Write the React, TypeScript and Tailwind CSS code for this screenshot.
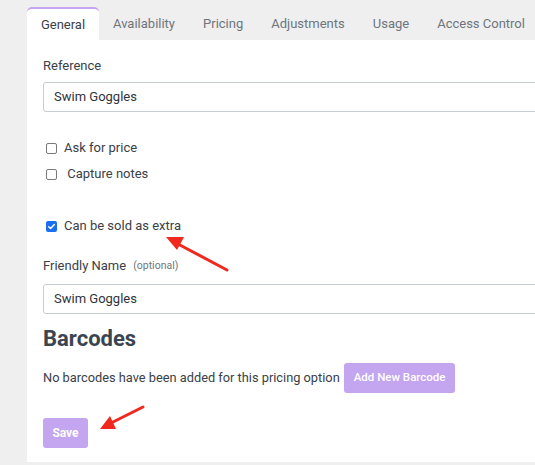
import React from 'react';

const tabs = ['General', 'Availability', 'Pricing', 'Adjustments', 'Usage', 'Access Control'];

const Checkbox = ({ checked = false }: { checked?: boolean }) =>
  checked ? (
    <span className="ml-[3px] flex h-[11px] w-[11px] items-center justify-center rounded-[2px] bg-[#1a6ff0]">
      <svg viewBox="0 0 12 12" className="h-[9px] w-[9px]">
        <path d="M2.2 6.2 L4.8 8.7 L9.8 3.3" fill="none" stroke="#fff" strokeWidth="1.9" strokeLinecap="round" strokeLinejoin="round" />
      </svg>
    </span>
  ) : (
    <span className="ml-[3px] h-[11px] w-[11px] rounded-[2px] border border-[#7a7a7a] bg-white" />
  );

const Field = ({ value }: { value: string }) => (
  <div className="flex h-[30px] w-[500px] items-center rounded-[3px] border border-[#c5ccd3] px-[10px] text-[13px] text-[#2f343a]">
    {value}
  </div>
);

export default function App() {
  return (
    <div
      className="relative h-[465px] w-[535px] overflow-hidden bg-[#efefef] pl-[27px] pt-[7px]"
      style={{ fontFamily: 'Roboto, "Liberation Sans", sans-serif' }}
    >
      {/* Tabs */}
      <div className="flex h-[33px] w-[600px] items-stretch whitespace-nowrap text-[13px]">
        {tabs.map((t, i) =>
          i === 0 ? (
            <div key={t} className="flex w-[72px] shrink-0 items-center justify-center rounded-t-[5px] border-t-2 border-[#c6a4f3] bg-white text-[#3a3f45]">
              {t}
            </div>
          ) : (
            <div key={t} className="flex shrink-0 items-center px-[14px] text-[#6e757c]">
              {t}
            </div>
          )
        )}
      </div>

      {/* Panel */}
      <div className="flex w-[530px] flex-col bg-white pb-[14px] pl-[16px] pt-[17px] text-[13px] text-[#3a4047]">
        <div className="leading-[18px]">Reference</div>
        <div className="mt-[7px]">
          <Field value="Swim Goggles" />
        </div>

        <label className="mt-[27px] flex h-[18px] items-center gap-[7px]">
          <Checkbox />
          <span>Ask for price</span>
        </label>
        <label className="mt-[8px] flex h-[18px] items-center gap-[7px]">
          <Checkbox />
          <span>&nbsp;Capture notes</span>
        </label>
        <label className="mt-[34px] flex h-[18px] items-center gap-[7px]">
          <Checkbox checked />
          <span>Can be sold as extra</span>
        </label>

        <div className="mt-[22px] flex h-[18px] items-center gap-[7px] leading-[18px]">
          <span>Friendly Name</span>
          <span className="text-[10.5px] text-[#6e757c]">(optional)</span>
        </div>
        <div className="mt-[9px]">
          <Field value="Swim Goggles" />
        </div>

        <h2 className="mt-[11px] text-[22px] font-bold leading-[28px] text-[#3b4550]">Barcodes</h2>

        <div className="mt-[10px] flex items-center">
          <span className="text-[12.8px]">No barcodes have been added for this pricing option</span>
          <button className="ml-[4px] h-[30px] rounded-[3px] bg-[#c3a5f0] px-[10px] text-[11.5px] font-medium text-white">
            Add New Barcode
          </button>
        </div>

        <div className="mt-[25px]">
          <button className="h-[30px] w-[45px] rounded-[3px] bg-[#c3a5f0] text-[12px] font-bold text-white">
            Save
          </button>
        </div>
      </div>

      {/* Annotation arrows */}
      <svg className="pointer-events-none absolute left-0 top-0" width="535" height="465" viewBox="0 0 535 465">
        <line x1="227" y1="270" x2="178" y2="244" stroke="#f0281e" strokeWidth="3" strokeLinecap="round" />
        <polygon points="166,237 184,237 177,250" fill="#f0281e" />
        <line x1="143" y1="407" x2="111" y2="423" stroke="#f0281e" strokeWidth="3" strokeLinecap="round" />
        <polygon points="100,429 110,416 116,429" fill="#f0281e" />
      </svg>
    </div>
  );
}
